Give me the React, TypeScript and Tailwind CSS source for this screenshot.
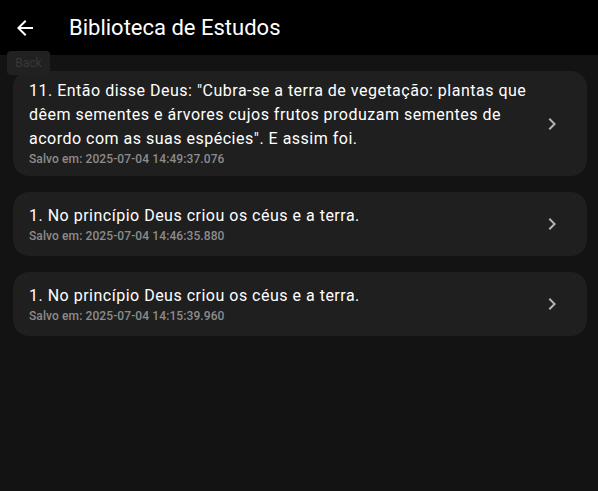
type Estudo = {
  texto: string;
  salvoEm: string;
};

const estudos: Estudo[] = [
  {
    texto:
      '11. Então disse Deus: "Cubra-se a terra de vegetação: plantas que dêem sementes e árvores cujos frutos produzam sementes de acordo com as suas espécies". E assim foi.',
    salvoEm: '2025-07-04 14:49:37.076',
  },
  { texto: '1. No princípio Deus criou os céus e a terra.', salvoEm: '2025-07-04 14:46:35.880' },
  { texto: '1. No princípio Deus criou os céus e a terra.', salvoEm: '2025-07-04 14:15:39.960' },
];

function App() {
  return (
    <div className="relative w-screen min-h-screen bg-[#131313] flex flex-col font-['Roboto',sans-serif]">
      <header className="h-[55px] bg-black flex items-center shrink-0">
        <button className="w-[24px] h-[24px] ml-[13px] flex items-center justify-center text-white">
          <svg width="24" height="24" viewBox="0 0 24 24" fill="currentColor">
            <path d="M20 11H7.83l5.59-5.59L12 4l-8 8 8 8 1.41-1.41L7.83 13H20v-2z" />
          </svg>
        </button>
        <h1 className="ml-[32px] text-[22px] leading-[28px] text-white font-normal">Biblioteca de Estudos</h1>
      </header>

      {/* tooltip do botão voltar */}
      <div className="absolute left-[7px] top-[51px] w-[43px] h-[24px] rounded-[4px] bg-[#212121] flex items-center justify-center text-[12px] text-[#393939]">
        Back
      </div>

      <main className="flex flex-col gap-4 pt-4 pl-[13px] pr-[11px]">
        {estudos.map((e, i) => (
          <div
            key={i}
            className="min-h-[64px] bg-[#1f1f1f] rounded-2xl flex items-center py-2 pl-4 pr-[23px]"
          >
            <div className="flex-1 flex flex-col pr-[12px]">
              <div className="text-[16px] leading-[24px] tracking-[0.5px] text-white">{e.texto}</div>
              <div className="text-[12px] leading-[17px] tracking-[0.1px] font-medium text-[#8c8c8c]">
                Salvo em: {e.salvoEm}
              </div>
            </div>
            <svg width="24" height="24" viewBox="0 0 24 24" fill="#b3b3b3">
              <path d="M10 6L8.59 7.41 13.17 12l-4.58 4.59L10 18l6-6z" />
            </svg>
          </div>
        ))}
      </main>
    </div>
  );
}

export default App;
